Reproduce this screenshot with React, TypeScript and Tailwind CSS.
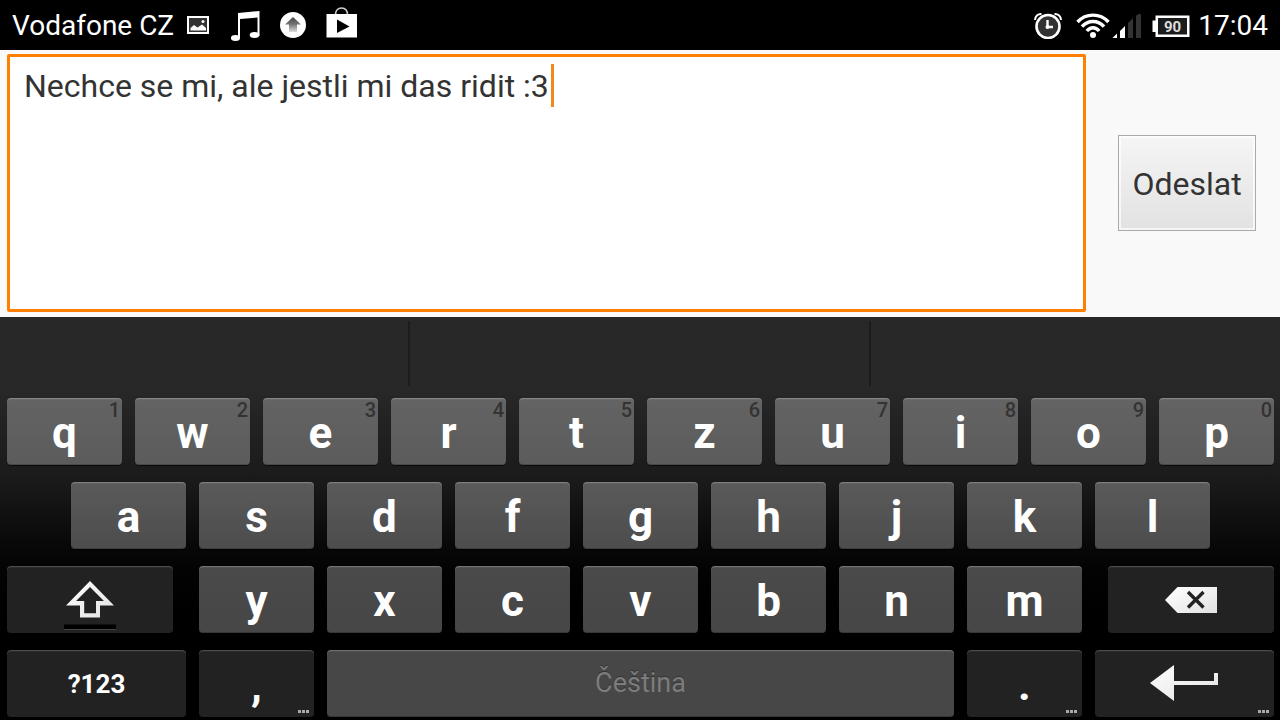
import { useState } from "react";
import type { ReactNode } from "react";

function PictureIcon() {
  return (
    <svg viewBox="0 0 24 20" className="h-5 w-6" aria-hidden="true">
      <rect x="2" y="2" width="20" height="16" fill="#333" stroke="#fff" strokeWidth="2" />
      <path d="M4.500 15.500v-2.500l3.500-3 3.500 2.500 4.500-3 4 3.500v2.500z" fill="#fff" />
      <circle cx="17" cy="6.500" r="1.500" fill="#fff" />
    </svg>
  );
}

function MusicIcon() {
  return (
    <svg viewBox="0 0 30 32" className="h-8 w-[30px]" aria-hidden="true">
      <path d="M8 4 29.500 2V27h-2V8.500L10 10v19H8z" fill="#fff" />
      <ellipse cx="5.500" cy="29" rx="4.600" ry="3" fill="#fff" />
      <ellipse cx="24.500" cy="26" rx="4.800" ry="3" fill="#fff" />
    </svg>
  );
}

function UploadIcon() {
  return (
    <svg viewBox="0 0 26 26" className="size-[26px]" aria-hidden="true">
      <defs>
        <linearGradient id="upload" x1="0" y1="0" x2="0" y2="1">
          <stop offset="0" stopColor="#444" />
          <stop offset="0.500" stopColor="#777" />
          <stop offset="1" stopColor="#ddd" />
        </linearGradient>
      </defs>
      <circle cx="13" cy="13" r="13" fill="#fff" />
      <path d="M13 5l8 7.500h-4V20H9v-7.500H5z" fill="url(#upload)" />
    </svg>
  );
}

function StoreIcon() {
  return (
    <svg viewBox="0 0 32 36" className="h-9 w-8" aria-hidden="true">
      <path d="M9.500 8C9.500 3.500 12 1 15.500 1S21.500 3.500 21.500 8" fill="none" stroke="#ccc" strokeWidth="1.600" />
      <path d="M.5 7h30.500v23.500H.5z" fill="#fff" />
      <path d="M11 12.500v13.500l12.500-6.500z" fill="#000" />
    </svg>
  );
}

function AlarmIcon() {
  return (
    <svg viewBox="0 0 28 28" className="size-7" aria-hidden="true">
      <circle cx="14" cy="15.500" r="11.500" fill="#333" stroke="#fff" strokeWidth="2.600" />
      <path d="M1 9C1 5 4 2.800 7.500 3M27 9C27 5 24 2.800 20.500 3" fill="none" stroke="#fff" strokeWidth="2" />
      <path d="M13.500 9V16H19" fill="none" stroke="#fff" strokeWidth="2.400" />
      <circle cx="13.500" cy="16" r="2" fill="#fff" />
    </svg>
  );
}

function WifiIcon() {
  return (
    <svg viewBox="0 0 34 26" className="h-[26px] w-[34px]" aria-hidden="true">
      <g fill="none" stroke="#fff" strokeWidth="3.400">
        <path d="M1.500 10C10 .8 24 .8 32.500 10" />
        <path d="M6 14.700C12 7.700 22 7.700 28 14.700" />
        <path d="M10.800 19C14.500 14.600 19.500 14.600 23.200 19" />
      </g>
      <circle cx="17" cy="23" r="3" fill="#fff" />
    </svg>
  );
}

function SignalIcon() {
  return (
    <svg viewBox="0 0 30 26" className="h-[26px] w-[30px]" aria-hidden="true">
      <path d="M.5 26 5 21.500V26zM8 19l5-5V26H8z" fill="#fff" />
      <path d="M16 11l5-5V26h-5zM24 3.500 27 2h2V26h-5z" fill="#333" />
    </svg>
  );
}

function BatteryIcon() {
  return (
    <svg viewBox="0 0 38 24" className="h-6 w-[38px]" role="img" aria-label="90">
      <path d="M3.500 2.500h34v21.500h-34V19H.5V7.500h3z" fill="#fff" />
      <path d="M6 5h29v16.500H6z" fill="#1c1c1c" />
      <text x="20.500" y="18.500" textAnchor="middle" fontSize="15" fontWeight="700" fill="#ddd">
        90
      </text>
    </svg>
  );
}

function Fade({ id }: { id: string }) {
  return (
    <defs>
      <linearGradient id={id} x1="0" y1="0" x2="1" y2="1">
        <stop offset="0" stopColor="#fff" />
        <stop offset="1" stopColor="#e2e2e2" />
      </linearGradient>
    </defs>
  );
}

function ShiftIcon() {
  return (
    <svg viewBox="0 -4 54 60" className="h-[60px] w-[54px]" aria-hidden="true">
      <Fade id="shift" />
      <path
        d="M27 7 51 31.500H37V43.500H17V31.500H3zM27 13 13 27H21.200V39.300H33V27H41z"
        fill="url(#shift)"
        fillRule="evenodd"
      />
      <path d="M1 50.500h52v5H1z" fill="#000" />
      <path d="M1 55.500h52" stroke="#444" />
    </svg>
  );
}

function BackspaceIcon() {
  return (
    <svg viewBox="0 0 54 26" className="h-[26px] w-[54px]" aria-hidden="true">
      <Fade id="backspace" />
      <path d="M13.500 0H53V26H13.500L1 13z" fill="url(#backspace)" />
      <path d="M24 5 39.500 20.500M39.500 5 24 20.500" stroke="#222" strokeWidth="3.400" />
    </svg>
  );
}

function EnterIcon() {
  return (
    <svg viewBox="1 0 70 38" className="h-[38px] w-[70px]" aria-hidden="true">
      <Fade id="enter" />
      <path d="M1 18 25 0V16H65V8h4V20H25V36z" fill="url(#enter)" />
    </svg>
  );
}

type KeyProps = {
  children: ReactNode;
  tone?: "letter" | "function";
  text?: string;
  hint?: string;
  more?: boolean;
  label?: string;
};

function Key({ children, tone = "letter", text = "pt-0.5 text-[44px] font-bold text-white", hint, more, label }: KeyProps) {
  const skin =
    tone === "letter"
      ? "bg-white/28 shadow-[inset_0_1px_0_rgba(255,255,255,0.18),inset_0_2px_1px_rgba(255,255,255,0.06),inset_0_-1px_0_rgba(0,0,0,0.2),0_1px_1px_rgba(0,0,0,0.6)]"
      : "bg-[#222] shadow-[inset_0_1px_0_rgba(255,255,255,0.15),inset_0_2px_1px_rgba(255,255,255,0.05)]";
  return (
    <div className="min-w-0 pr-1.5 pl-[7px]">
      <button
        type="button"
        aria-label={label}
        className={`relative flex h-[67px] w-full items-center justify-center rounded-[4px] leading-none ${text} ${skin}`}
      >
        {children}
        {hint && (
          <span className="absolute top-0.5 right-0.5 text-xl leading-5 font-medium text-[#333]">{hint}</span>
        )}
        {more && (
          <span className="absolute right-[5px] bottom-1 flex gap-px">
            <span className="size-[3px] bg-[#aaa]" />
            <span className="size-[3px] bg-[#aaa]" />
            <span className="size-[3px] bg-[#aaa]" />
          </span>
        )}
      </button>
    </div>
  );
}

function StatusBar() {
  return (
    <header className="flex h-[50px] shrink-0 items-center justify-between bg-black px-3 text-[28px] text-white">
      <div className="flex items-center gap-5">
        <div className="flex items-center gap-3">
          <span className="pt-0.5">Vodafone CZ</span>
          <PictureIcon />
        </div>
        <MusicIcon />
        <UploadIcon />
        <StoreIcon />
      </div>
      <div className="flex items-center gap-2">
        <div className="flex items-center gap-2.5">
          <div className="flex items-center gap-3.5">
            <AlarmIcon />
            <div className="flex items-center gap-0.5">
              <WifiIcon />
              <SignalIcon />
            </div>
          </div>
          <BatteryIcon />
        </div>
        <span className="pt-0.5">17:04</span>
      </div>
    </header>
  );
}

function Compose() {
  const [message, setMessage] = useState("Nechce se mi, ale jestli mi das ridit :3");
  return (
    <main className="flex flex-1 items-stretch bg-[#f9f9f9] pt-1 pr-6 pb-[5px] pl-[7px]">
      <div className="relative flex flex-1">
        <textarea
          aria-label="Zpráva"
          value={message}
          onChange={(event) => setMessage(event.target.value)}
          className="min-h-40 flex-1 resize-none rounded-[2px] border-3 border-[#ff8000] bg-white px-3.5 py-2 text-[32px] leading-[43px] text-[#333] outline-none"
        />
        <span className="absolute top-2.5 left-[544px] h-[43px] w-[3px] bg-[#f08a1d]" />
      </div>
      <button
        type="button"
        className="ml-8 h-24 w-[138px] self-center border border-[#aaa] bg-linear-to-b from-[#f5f5f5] to-[#e2e2e2] pt-0.5 text-[32px] text-[#333] shadow-[inset_0_0_0_2px_rgba(255,255,255,0.7)]"
      >
        Odeslat
      </button>
    </main>
  );
}

function Keyboard() {
  return (
    <section className="shrink-0 bg-linear-to-b from-[#282828] from-18% via-[#191919] via-42% to-black to-82% pb-[3px]">
      <div className="grid h-[73px] grid-cols-[410fr_461fr_409fr] py-1">
        <div className="border-r-2 border-[#1c1c1c]" />
        <div className="border-r-2 border-[#1c1c1c]" />
        <div />
      </div>
      <div className="mt-2 flex flex-col gap-[17px]">
        <div className="grid grid-cols-10">
          {[..."qwertzuiop"].map((letter, index) => (
            <Key key={letter} hint={String((index + 1) % 10)}>
              {letter}
            </Key>
          ))}
        </div>
        <div className="grid grid-cols-[1fr_repeat(9,2fr)_1fr]">
          <div />
          {[..."asdfghjkl"].map((letter) => (
            <Key key={letter}>{letter}</Key>
          ))}
        </div>
        <div className="grid grid-cols-[14fr_1fr_repeat(7,10fr)_1fr_14fr]">
          <Key tone="function" text="text-white" label="Shift">
            <ShiftIcon />
          </Key>
          <div />
          {[..."yxcvbnm"].map((letter) => (
            <Key key={letter}>{letter}</Key>
          ))}
          <div />
          <Key tone="function" text="text-white" label="Backspace">
            <BackspaceIcon />
          </Key>
        </div>
        <div className="grid grid-cols-[15fr_10fr_50fr_10fr_15fr]">
          <Key tone="function" text="text-[26px] font-bold text-white">
            ?123
          </Key>
          <Key tone="function" more>
            ,
          </Key>
          <Key text="text-[27px] text-[#7c7c7c] [text-shadow:0_-1px_0_#333]">Čeština</Key>
          <Key tone="function" more>
            .
          </Key>
          <Key tone="function" text="text-white" label="Enter" more>
            <EnterIcon />
          </Key>
        </div>
      </div>
    </section>
  );
}

export default function App() {
  return (
    <div className="flex min-h-screen flex-col bg-black font-[Roboto,sans-serif]">
      <StatusBar />
      <Compose />
      <Keyboard />
    </div>
  );
}
